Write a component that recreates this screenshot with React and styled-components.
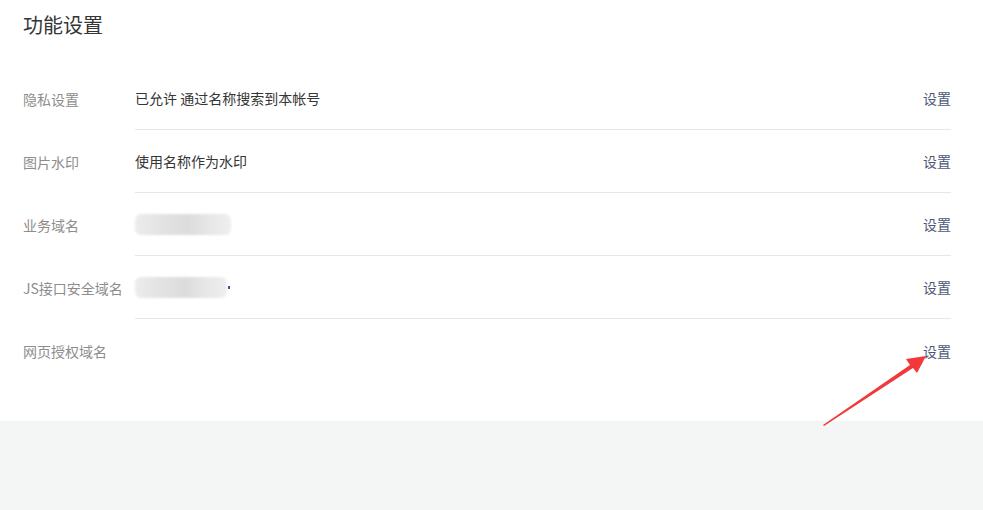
import React from 'react';
import styled, { createGlobalStyle } from 'styled-components';

const Global = createGlobalStyle`
  html, body {
    margin: 0;
    padding: 0;
    background: #f4f5f5;
    font-family: "Noto Sans CJK SC", "Liberation Sans", sans-serif;
  }
`;

const Page = styled.div`
  position: relative;
  height: 510px;
  background: #f4f5f5;
`;

const Panel = styled.div`
  background: #fff;
  padding: 14px 32px 39px 23px;
`;

const Title = styled.h2`
  margin: 0 0 31px;
  font-size: 20px;
  line-height: 22px;
  font-weight: 400;
  color: #353535;
`;

const Row = styled.div`
  display: flex;
  align-items: stretch;
  height: 63px;
  font-size: 14px;
`;

const Label = styled.div`
  width: 112px;
  flex: none;
  display: flex;
  align-items: center;
  color: #8d8d8d;
`;

const Body = styled.div`
  flex: 1;
  display: flex;
  align-items: center;
  justify-content: space-between;
  border-bottom: ${(p) => (p.$last ? 'none' : '1px solid #e7e7e7')};
  color: #353535;
`;

const Action = styled.a`
  color: #4c5877;
  text-decoration: none;
  cursor: pointer;
`;

const Blur = styled.span`
  display: inline-block;
  width: ${(p) => p.$w}px;
  height: 21px;
  border-radius: 6px;
  vertical-align: middle;
  background: linear-gradient(90deg, #ececec, #e2e2e2 30%, #dcdcdc 55%, #e6e6e6 75%, #efefef);
  filter: blur(0.8px);
`;

const Dot = styled.span`
  display: inline-block;
  width: 2px;
  height: 3px;
  margin-left: 1px;
  background: #2a4fa0;
  vertical-align: middle;
`;

const Arrow = styled.svg`
  position: absolute;
  left: 0;
  top: 0;
  pointer-events: none;
`;

const rows = [
  { label: '隐私设置', value: '已允许 通过名称搜索到本帐号' },
  { label: '图片水印', value: '使用名称作为水印' },
  { label: '业务域名', blur: 96 },
  { label: 'JS接口安全域名', blur: 92, dot: true },
  { label: '网页授权域名' },
];

export default function App() {
  return (
    <Page>
      <Global />
      <Panel>
        <Title>功能设置</Title>
        {rows.map((r, i) => (
          <Row key={r.label}>
            <Label>{r.label}</Label>
            <Body $last={i === rows.length - 1}>
              <span>
                {r.value}
                {r.blur && <Blur $w={r.blur} />}
                {r.dot && <Dot />}
              </span>
              <Action>设置</Action>
            </Body>
          </Row>
        ))}
      </Panel>
      <Arrow width="983" height="510" viewBox="0 0 983 510">
        <path d="M823 425 L910 365 L906 359 L926 356 L917 373 L913 368 L824 426 Z" fill="#f2383a" />
      </Arrow>
    </Page>
  );
}
